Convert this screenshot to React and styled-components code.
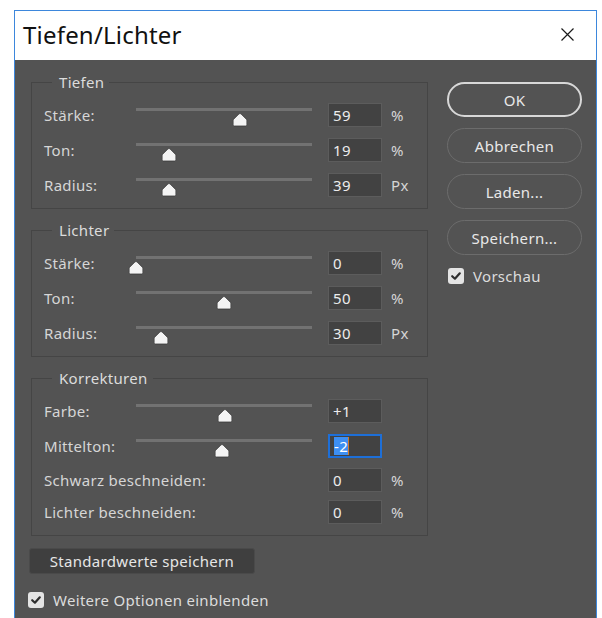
import React from "react";
import styled, { createGlobalStyle } from "styled-components";

const GlobalStyle = createGlobalStyle`
  html, body {
    margin: 0;
    padding: 0;
    background: #ffffff;
    overflow: hidden;
  }
  body {
    font-family: "Noto Sans", "Liberation Sans", sans-serif;
  }
`;

const groups = [
  {
    title: "Tiefen",
    rows: [
      { label: "Stärke:", slider: 0.59, value: "59", unit: "%" },
      { label: "Ton:", slider: 0.19, value: "19", unit: "%" },
      { label: "Radius:", slider: 0.19, value: "39", unit: "Px" },
    ],
  },
  {
    title: "Lichter",
    rows: [
      { label: "Stärke:", slider: 0, value: "0", unit: "%" },
      { label: "Ton:", slider: 0.5, value: "50", unit: "%" },
      { label: "Radius:", slider: 0.143, value: "30", unit: "Px" },
    ],
  },
  {
    title: "Korrekturen",
    rows: [
      { label: "Farbe:", slider: 0.505, value: "+1" },
      { label: "Mittelton:", slider: 0.49, value: "-2", focused: true },
      { label: "Schwarz beschneiden:", value: "0", unit: "%", space: 10 },
      { label: "Lichter beschneiden:", value: "0", unit: "%", space: 8 },
    ],
  },
];

const actions = ["OK", "Abbrechen", "Laden...", "Speichern..."];

function Thumb() {
  return (
    <svg width="15" height="14" viewBox="0 0 15 14">
      <path
        d="M7.5 0.6 C8 0.6 8.4 0.8 8.8 1.2 L13.7 6.1 C14.2 6.6 14.4 7.1 14.4 7.7 V11.4 C14.4 12.4 13.8 13 12.8 13 H2.2 C1.2 13 0.6 12.4 0.6 11.4 V7.7 C0.6 7.1 0.8 6.6 1.3 6.1 L6.2 1.2 C6.6 0.8 7 0.6 7.5 0.6 Z"
        fill="#f4f4f4"
        stroke="#3a3a3a"
        strokeWidth="0.8"
      />
    </svg>
  );
}

function Check({ label, indent, top }) {
  return (
    <CheckRow $indent={indent} $top={top}>
      <Box>
        <svg width="12" height="12" viewBox="0 0 12 12">
          <path d="M2.2 6.2 L4.9 8.7 L9.8 3.3" fill="none" stroke="#2e2e2e" strokeWidth="2.2" strokeLinecap="round" strokeLinejoin="round" />
        </svg>
      </Box>
      <span>{label}</span>
    </CheckRow>
  );
}

export default function App() {
  return (
    <>
      <GlobalStyle />
      <Window>
        <TitleBar>
          <Title>Tiefen/Lichter</Title>
          <Close>
            <svg width="13" height="13" viewBox="0 0 13 13">
              <path d="M0.5 0.5 L12.5 12.5 M12.5 0.5 L0.5 12.5" stroke="#1a1a1a" strokeWidth="1.2" />
            </svg>
          </Close>
        </TitleBar>

        <Body>
          <LeftColumn>
            {groups.map((group) => (
              <Group key={group.title}>
                <Legend>{group.title}</Legend>
                {group.rows.map((row, i) => (
                  <Row key={row.label} $space={i === 0 ? 12 : row.space ?? 11}>
                    <Label>{row.label}</Label>
                    <SliderCell>
                      {row.slider !== undefined && (
                        <>
                          <Rail />
                          <ThumbHolder style={{ left: `${row.slider * 100}%` }}>
                            <Thumb />
                          </ThumbHolder>
                        </>
                      )}
                    </SliderCell>
                    <Field $focused={row.focused}>
                      {row.focused ? <Selected>{row.value}</Selected> : row.value}
                      {row.focused && <Caret />}
                    </Field>
                    <Unit>{row.unit}</Unit>
                  </Row>
                ))}
              </Group>
            ))}

            <DefaultsButton>Standardwerte speichern</DefaultsButton>
            <Check label="Weitere Optionen einblenden" indent={-3} top={16} />
          </LeftColumn>

          <RightColumn>
            {actions.map((a) => (
              <PillButton key={a} $primary={a === "OK"}>{a}</PillButton>
            ))}
            <Check label="Vorschau" indent={1} top={0} />
          </RightColumn>
        </Body>
      </Window>
    </>
  );
}

const Window = styled.div`
  margin: 10px 0 0 14px;
  width: 581px;
  height: 620px;
  border: 1px solid #3d87dc;
  border-bottom: none;
  display: flex;
  flex-direction: column;
  background: #535353;
`;

const TitleBar = styled.div`
  height: 49px;
  background: #ffffff;
  display: flex;
  align-items: center;
  justify-content: space-between;
  padding: 0 22px 0 8px;
  flex-shrink: 0;
`;

const Title = styled.div`
  font-size: 24px;
  color: #111111;
  letter-spacing: 0.2px;
  padding-bottom: 2px;
`;

const Close = styled.div`
  display: flex;
  align-items: center;
  padding-bottom: 3px;
`;

const Body = styled.div`
  display: flex;
  gap: 19px;
  padding: 14px 12px 0 16px;
  color: #d8d8d8;
  font-size: 15px;
  letter-spacing: 0.3px;
`;

const LeftColumn = styled.div`
  width: 397px;
  display: flex;
  flex-direction: column;
`;

const Group = styled.fieldset`
  margin: 0 0 12px 0;
  padding: 0 0 11px 12px;
  border: 1px solid #454545;
  min-width: 0;

  &:first-of-type {
    margin-top: -1px;
  }
`;

const Legend = styled.legend`
  margin-left: 8px;
  padding: 0 5px 0 7px;
  line-height: 18px;
  color: #dcdcdc;
`;

const Row = styled.div`
  display: flex;
  align-items: center;
  height: 24px;
  margin-top: ${(p) => p.$space}px;
`;

const Label = styled.div`
  width: 92px;
  white-space: nowrap;
  color: #d6d6d6;
`;

const SliderCell = styled.div`
  position: relative;
  width: 176px;
  height: 24px;
  margin-right: 16px;
`;

const Rail = styled.div`
  margin-top: 5px;
  height: 3px;
  background: #727272;
`;

const ThumbHolder = styled.div`
  position: absolute;
  top: 10px;
  transform: translateX(-50%);
  line-height: 0;
`;

const Field = styled.div`
  box-sizing: border-box;
  width: 54px;
  height: 24px;
  display: flex;
  align-items: center;
  padding-left: 4px;
  background: #424242;
  border: ${(p) => (p.$focused ? "2px solid #1d6fd8" : "1px solid #5c5c5c")};
  color: #ececec;
`;

const Selected = styled.span`
  background: #3d8ff2;
  color: #ffffff;
  line-height: 18px;
`;

const Caret = styled.span`
  width: 1px;
  height: 18px;
  background: #d07a2a;
`;

const Unit = styled.div`
  margin-left: 9px;
  color: #d6d6d6;
`;

const DefaultsButton = styled.div`
  box-sizing: border-box;
  margin: 0 0 0 -2px;
  width: 226px;
  height: 26px;
  display: flex;
  align-items: center;
  justify-content: center;
  background: #3f3f3f;
  border: 1px solid #4a4a4a;
  border-radius: 3px;
  color: #e6e6e6;
`;

const CheckRow = styled.div`
  display: flex;
  align-items: center;
  gap: 9px;
  margin-left: ${(p) => p.$indent}px;
  margin-top: ${(p) => p.$top}px;
  color: #dcdcdc;
`;

const Box = styled.div`
  width: 16px;
  height: 16px;
  border-radius: 3px;
  background: #e4e4e4;
  display: flex;
  align-items: center;
  justify-content: center;
`;

const RightColumn = styled.div`
  width: 135px;
  display: flex;
  flex-direction: column;
  gap: 11px;
  padding-top: 8px;
`;

const PillButton = styled.div`
  box-sizing: border-box;
  height: 35px;
  display: flex;
  align-items: center;
  justify-content: center;
  border-radius: 18px;
  border: ${(p) => (p.$primary ? "2px solid #d8d8d8" : "1px solid #6c6c6c")};
  color: #e8e8e8;
`;
